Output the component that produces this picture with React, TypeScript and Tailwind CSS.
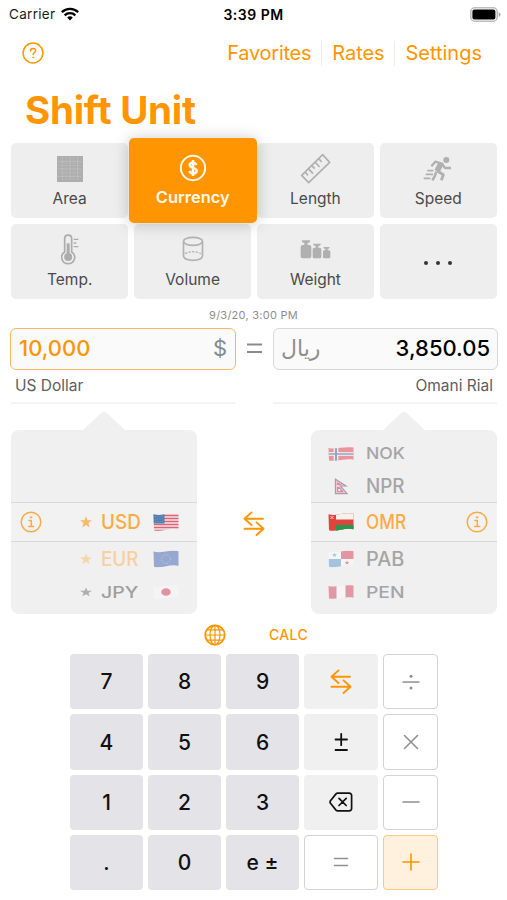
import { useId, useState } from "react";
import type { ReactNode } from "react";
import clsx from "clsx";

const sans = "font-['Inter','Liberation_Sans',sans-serif]";

/* ---------- icons ---------- */

function WifiIcon() {
  return (
    <svg width="18" height="14" viewBox="0 0 54 42" fill="none" stroke="#000" strokeWidth="7">
      <path d="M2.500 15.500a35 35 0 0 1 49 0" />
      <path d="M11 25a23 23 0 0 1 32 0" />
      <path d="M18.500 31.500a12.500 12.500 0 0 1 17 0L27 40.500Z" fill="#000" stroke="none" />
    </svg>
  );
}

function BatteryIcon() {
  return (
    <svg width="31" height="15" viewBox="0 0 31 15">
      <rect x="0.800" y="0.800" width="26.400" height="13.400" rx="4" fill="#fff" stroke="#bdbdbd" strokeWidth="1.600" />
      <rect x="2.400" y="2.600" width="23" height="9.800" rx="2" fill="#000" />
      <path d="M28.700 5.200v4.600c1.300-.4 1.800-1.300 1.800-2.300s-.5-1.900-1.800-2.300Z" fill="#aaa" />
    </svg>
  );
}

function HelpIcon() {
  return (
    <svg width="22" height="22" viewBox="0 0 22 22" fill="none" stroke="#ff9500" strokeWidth="1.500" strokeLinecap="round">
      <circle cx="11" cy="11" r="9.900" />
      <path d="M8.500 8.900c0-1.500 1-2.500 2.600-2.500s2.600.9 2.600 2.200c0 2-2.600 2-2.600 4" />
      <circle cx="11.100" cy="15.400" r="0.500" fill="#ff9500" strokeWidth="0.800" />
    </svg>
  );
}

function InfoIcon() {
  return (
    <svg width="22" height="22" viewBox="0 0 22 22" fill="none" stroke="#fbab45" strokeWidth="1.500" strokeLinecap="round" strokeLinejoin="round">
      <circle cx="11" cy="11" r="9.800" />
      <path d="M9 9.400h2.300v6M8.700 15.600h5" />
      <circle cx="11" cy="6.300" r="0.900" fill="#fbab45" strokeWidth="0.600" />
    </svg>
  );
}

function SwapIcon() {
  return (
    <svg width="22" height="25" viewBox="0 0 22 25" fill="none" stroke="#ff9500" strokeWidth="1.900" strokeLinecap="round" strokeLinejoin="round">
      <path d="M20 7.700H1.800M8.500 1.400 1.500 7.700 8.500 14" />
      <path d="M1.500 17.700h18.300M13.500 11.400l7 6.300-7 6.300" />
    </svg>
  );
}

function GlobeIcon() {
  return (
    <svg width="22" height="22" viewBox="0 0 22 22" fill="none" stroke="#ff9500" strokeWidth="1.200">
      <circle cx="11" cy="11" r="9.700" strokeWidth="1.800" />
      <ellipse cx="11" cy="11" rx="5" ry="9.700" />
      <path d="M11 1.300v19.400M1.300 11h19.400M3 5.800h16M3 16.200h16" />
    </svg>
  );
}

function BackspaceIcon() {
  return (
    <svg width="24" height="20" viewBox="0 0 24 20" fill="none" stroke="#111" strokeWidth="1.700" strokeLinecap="round" strokeLinejoin="round">
      <path d="M8.700 1.200h11.600a2.300 2.300 0 0 1 2.300 2.300v13a2.300 2.300 0 0 1-2.300 2.300H8.700a2.500 2.500 0 0 1-1.700-.7L1.700 11.500a2 2 0 0 1 0-3L7 1.900a2.500 2.500 0 0 1 1.700-.7Z" />
      <path d="m10 6.300 7.200 7.200M17.200 6.300 10 13.500" />
    </svg>
  );
}

function AreaIcon() {
  return (
    <svg width="26" height="26" viewBox="0 0 78 78">
      <rect width="78" height="78" fill="#aeaeae" />
      <path d="M16 3v72M39 3v72M62 3v72M3 17h72M3 39h72M3 61h72" stroke="#c9c9c9" strokeWidth="2.500" strokeDasharray="5 3" />
      <path d="M27.500 3v72M50.500 3v72M3 28h72M3 50h72" stroke="#bcbcbc" strokeWidth="1.500" />
    </svg>
  );
}

function CurrencyIcon() {
  return (
    <svg width="28" height="28" viewBox="0 0 84 84" fill="none" stroke="#fff8ea" strokeWidth="6">
      <circle cx="42" cy="42" r="36.500" />
      <path d="M52 33c-2-5-5-7-10-7-7 0-10 3-10 7 0 11 21 6 21 17 0 5-5 8-11 8s-9-2-11-7M42 18v48" strokeWidth="7.500" />
    </svg>
  );
}

function LengthIcon() {
  return (
    <svg width="31" height="31" viewBox="141 69 93 93" fill="none" stroke="#b0b0b0" strokeWidth="5" strokeLinejoin="round">
      <path d="M146 136 209 74l21 23-63 61Z" />
      <path d="m156 126 9 10M166 116l14 15M176 106l9 10M186 96l14 15M197 86l9 10" />
    </svg>
  );
}

function SpeedIcon() {
  return (
    <svg width="32" height="27" viewBox="510 74 96 81" fill="none" stroke="#b0b0b0" strokeWidth="8.500" strokeLinejoin="round">
      <circle cx="583" cy="89" r="9" fill="#b0b0b0" stroke="none" />
      <path d="m566 101-11 22" strokeWidth="17" />
      <path d="m574 101-24-7-12 14" strokeWidth="7" />
      <path d="m570 101 9 12h18" strokeWidth="7" />
      <path d="m556 122 18 11-6 17" />
      <path d="m553 124-5 14-7 12" strokeWidth="7.500" />
      <path d="M526 121h18M521 132h22M515 144h20" strokeWidth="5" />
    </svg>
  );
}

function TempIcon() {
  return (
    <svg width="18" height="31" viewBox="183 312 54 93" fill="none" stroke="#acacac" strokeWidth="5">
      <path d="M194 366v-40c0-14 21-14 21 0v40c17 11 8 35-10.500 35S177 377 194 366Z" />
      <circle cx="204.500" cy="381" r="12" fill="#acacac" stroke="none" />
      <path d="M204.500 340v38" strokeWidth="9" />
      <path d="M221 328h14M221 339h8M221 350h14" strokeWidth="4" />
    </svg>
  );
}

function VolumeIcon() {
  return (
    <svg width="22" height="26" viewBox="544 319 66 78" fill="none" stroke="#b2b2b2" strokeWidth="5">
      <ellipse cx="577" cy="335" rx="28.500" ry="12" />
      <path d="M548.500 335v45c5 16 52 16 57 0v-45" />
      <path d="M553 372q24-12 48 0" strokeWidth="4" strokeDasharray="7 4" />
    </svg>
  );
}

function WeightIcon() {
  return (
    <svg width="31" height="19" viewBox="142 337 93 57" fill="#b0b0b0">
      <path d="M147 338h26l-3 7h-5v7h6q5 0 5 6v28q0 6-6 6h-20q-6 0-6-6v-28q0-6 6-6h5v-7h-5Z" />
      <path d="M181 348h24l-3 6h-5v6h4q5 0 5 5v22q0 5-5 5h-16q-5 0-5-5v-22q0-5 5-5h4v-6h-5Z" />
      <path d="M212 358h19l-2 5h-4v5h3q5 0 5 4v16q0 4-4 4h-14q-4 0-4-4v-16q0-4 4-4h3v-5h-4Z" />
    </svg>
  );
}

/* ---------- flags ---------- */

const FLAGS: Record<string, ReactNode> = {
  USD: (
    <>
      <rect width="26" height="20" fill="#f4e6e8" />
      <path d="M0 3.500h26M0 6.500h26M0 9.500h26M0 12.500h26M0 15.500h26M0 18.500h26" stroke="#d93f53" strokeWidth="1.700" />
      <rect width="11.500" height="11.500" fill="#2a62a0" />
      <path d="M2 4.500h9M2 7h9M2 9.500h9" stroke="#6f97c4" strokeWidth="0.700" strokeDasharray="1 1.300" />
    </>
  ),
  EUR: (
    <>
      <rect width="26" height="20" fill="#3e62b4" />
      <circle cx="13" cy="10" r="4.600" fill="none" stroke="#c8c77e" strokeWidth="0.800" strokeDasharray="1 1.400" />
    </>
  ),
  JPY: (
    <>
      <rect width="26" height="20" fill="#fbfbfb" />
      <circle cx="13" cy="10" r="4.800" fill="#d4204c" />
    </>
  ),
  NOK: (
    <>
      <rect width="26" height="20" fill="#e23c4b" />
      <path d="M8 0v20M0 10h26" stroke="#fff" strokeWidth="4.600" />
      <path d="M8 0v20M0 10h26" stroke="#345896" strokeWidth="2.200" />
    </>
  ),
  OMR: (
    <>
      <rect width="26" height="20" fill="#dc3c35" />
      <path d="M8 0h18v7.500H8Z" fill="#f5f2ef" />
      <path d="M8 13h18v7H8Z" fill="#189447" />
      <path d="m2.500 4 3 3m0-3-3 3" stroke="#f6c9c3" strokeWidth="1" />
    </>
  ),
  PAB: (
    <>
      <rect width="26" height="20" fill="#fcfcfc" />
      <path d="M13 0h13v10H13Z" fill="#d42945" />
      <path d="M0 10h13v10H0Z" fill="#4491d0" />
      <path d="m6.500 3.500.7 1.600h1.700L7.500 6.200l.6 1.700-1.600-1-1.600 1 .6-1.700-1.400-1.100h1.700Z" fill="#4491d0" />
      <path d="m19 11.500.7 1.600h1.700L20 14.200l.6 1.700-1.600-1-1.600 1 .6-1.700-1.400-1.100h1.700Z" fill="#d42945" />
    </>
  ),
  PEN: (
    <>
      <rect width="26" height="20" fill="#fcfcfc" />
      <path d="M0 0h8.500v20H0ZM17.500 0H26v20h-8.500Z" fill="#cf2f47" />
    </>
  ),
};

function Flag({ code, className }: { code: string; className?: string }) {
  const id = useId();

  // Nepal is the one flag that isn't a rectangle
  if (code === "NPR") {
    return (
      <svg width="26" height="19" viewBox="0 0 26 20" preserveAspectRatio="none" className={className}>
        <path d="M7.500 2 18 9.500h-5.500l6.500 8.500H7.500Z" fill="#ecc3cd" stroke="#7f6380" strokeWidth="1.300" />
        <path d="M9 5l5.500 3.500H9ZM9 10.500h2.500l4.500 6H9Z" fill="#d94466" />
        <circle cx="11.300" cy="14" r="1.200" fill="#fff" />
      </svg>
    );
  }

  return (
    <svg width="26" height="20" viewBox="0 0 26 20" preserveAspectRatio="none" className={className}>
      <defs>
        <clipPath id={id}>
          <path d="M.5 2.200c4 1.200 7.500.7 12-.2s8.500-1.100 13-.3v15.600c-4-1.200-8-.5-12.500.4S4.500 19.200 1 18.200Z" />
        </clipPath>
      </defs>
      <g clipPath={`url(#${id})`}>{FLAGS[code]}</g>
    </svg>
  );
}

/* ---------- unit tiles ---------- */

const UNITS: { label: string; icon: ReactNode }[] = [
  { label: "Area", icon: <AreaIcon /> },
  { label: "Currency", icon: <CurrencyIcon /> },
  { label: "Length", icon: <LengthIcon /> },
  { label: "Speed", icon: <SpeedIcon /> },
  { label: "Temp.", icon: <TempIcon /> },
  { label: "Volume", icon: <VolumeIcon /> },
  { label: "Weight", icon: <WeightIcon /> },
];

function UnitTile({ label, icon, active, onClick }: { label: string; icon: ReactNode; active: boolean; onClick: () => void }) {
  return (
    <button
      type="button"
      onClick={onClick}
      className={clsx(
        "flex flex-col items-center rounded-[5px]",
        active
          ? "relative z-10 -mr-[5.500px] -ml-[5px] -my-[5px] bg-[#ff9500] pt-[13px] text-[16.500px] font-semibold text-[#fff8ea] shadow-[0_1px_16px_rgba(0,0,0,0.22)]"
          : "bg-[#eeeeee] pt-[9px] text-[15.500px] text-[#4a4a4a]",
      )}
    >
      <span className="flex h-[33px] items-center justify-center">{icon}</span>
      <span className="leading-[27px]">{label}</span>
    </button>
  );
}

/* ---------- pickers ---------- */

type Row = { code: string; star?: boolean; text: string; fit: string; dim: string; squash?: string };

const FROM: Row[] = [
  { code: "USD", star: true, text: "text-[#fbab45] font-medium", fit: "scale-x-[0.920]", dim: "opacity-80" },
  { code: "EUR", star: true, text: "text-[#f9cf9c] font-medium", fit: "scale-x-[0.920]", dim: "opacity-50", squash: "scale-y-95" },
  { code: "JPY", star: true, text: "text-[#9e9e9e] font-medium", fit: "scale-x-[0.950]", dim: "opacity-45", squash: "scale-y-[0.780]" },
];

const TO: Row[] = [
  { code: "NOK", text: "text-[#a5a5a5] font-medium", fit: "scale-x-[0.860]", dim: "opacity-50", squash: "scale-y-[0.780]" },
  { code: "NPR", text: "text-[#a5a5a5] font-medium", fit: "scale-x-[0.920]", dim: "opacity-60", squash: "scale-y-95" },
  { code: "OMR", text: "text-[#fbab45] font-medium", fit: "scale-x-[0.840]", dim: "opacity-95" },
  { code: "PAB", text: "text-[#a5a5a5] font-medium", fit: "scale-x-[0.970]", dim: "opacity-45", squash: "scale-y-95" },
  { code: "PEN", text: "text-[#a5a5a5] font-medium", fit: "scale-x-[0.940]", dim: "opacity-45", squash: "scale-y-[0.780]" },
];

function Star({ className }: { className: string }) {
  return (
    <svg width="12" height="12" viewBox="0 0 12 12" className={className} fill="currentColor">
      <path d="m6 0 1.500 4.200 4.500.1-3.600 2.800 1.300 4.400L6 8.900l-3.700 2.600 1.300-4.400L0 4.300l4.500-.1Z" />
    </svg>
  );
}

function PickerRow({ row, side }: { row: Row; side: "from" | "to" }) {
  if (side === "from") {
    return (
      <div className={clsx("flex flex-1 items-center justify-end pr-[18px]", row.squash)}>
        <Star className={clsx("mr-[9px]", row.text, "opacity-80")} />
        <span className={clsx("w-[40px] origin-left text-[20.500px] leading-none", row.text, row.fit)}>{row.code}</span>
        <Flag code={row.code} className={clsx("ml-[12px]", row.dim)} />
      </div>
    );
  }
  return (
    <div className={clsx("flex flex-1 items-center pl-[17px]", row.squash)}>
      <Flag code={row.code} className={row.dim} />
      <span className={clsx("ml-[12px] origin-left text-[20.500px] leading-none", row.text, row.fit)}>{row.code}</span>
    </div>
  );
}

function Picker({ rows, side }: { rows: Row[]; side: "from" | "to" }) {
  const above = side === "from" ? [] : rows.slice(0, 2);
  const current = side === "from" ? rows[0] : rows[2];
  const below = side === "from" ? rows.slice(1) : rows.slice(3);

  return (
    <div className="flex w-[186px] flex-col">
      <svg width="42" height="19" viewBox="0 0 42 19" className="mx-auto block">
        <path d="M0 19 18 2.300Q21-.5 24 2.300L42 19Z" fill="#f0f0f0" />
      </svg>
      <div className="flex h-[184px] flex-col overflow-hidden rounded-[8px] bg-[#f0f0f0]">
        <div className="flex h-[72px] flex-col pt-[8px]">
          {above.map((row) => (
            <PickerRow key={row.code} row={row} side={side} />
          ))}
        </div>
        <div className={clsx("flex h-[40px] items-center border-y border-[#d8d8d8] bg-[#f2f2f2]", side === "to" && "flex-row-reverse")}>
          <button type="button" className="mx-[9px]">
            <InfoIcon />
          </button>
          <PickerRow row={current} side={side} />
        </div>
        <div className="flex h-[66px] flex-col pt-px">
          {below.map((row) => (
            <PickerRow key={row.code} row={row} side={side} />
          ))}
        </div>
      </div>
    </div>
  );
}

/* ---------- keypad ---------- */

type Key = { id: string; face: ReactNode; kind: "digit" | "fn" | "equals" | "op" | "add" };

function OpGlyph({ d }: { d: string }) {
  return (
    <svg width="20" height="20" viewBox="0 0 20 20" fill="none" stroke="currentColor" strokeWidth="1.600" strokeLinecap="round">
      <path d={d} />
    </svg>
  );
}

const digit = (s: string): Key => ({ id: s, face: s, kind: "digit" });

const KEYS: Key[] = [
  digit("7"),
  digit("8"),
  digit("9"),
  { id: "swap", face: <SwapIcon />, kind: "fn" },
  {
    id: "div",
    face: (
      <svg width="20" height="20" viewBox="0 0 20 20" fill="#919191">
        <rect x="1.500" y="9.300" width="17" height="1.500" />
        <circle cx="10" cy="4.300" r="1.500" />
        <circle cx="10" cy="15.900" r="1.500" />
      </svg>
    ),
    kind: "op",
  },
  digit("4"),
  digit("5"),
  digit("6"),
  {
    id: "sign",
    face: (
      <svg width="16" height="20" viewBox="0 0 16 20" fill="none" stroke="#111" strokeWidth="1.800" strokeLinecap="round">
        <path d="M2.500 7.500h11.500M8.200 1.800v11.400M2.500 18h11.500" />
      </svg>
    ),
    kind: "fn",
  },
  { id: "mul", face: <OpGlyph d="m3.500 3.500 13 13m0-13-13 13" />, kind: "op" },
  digit("1"),
  digit("2"),
  digit("3"),
  { id: "del", face: <BackspaceIcon />, kind: "fn" },
  { id: "sub", face: <OpGlyph d="M2 10h16" />, kind: "op" },
  digit("."),
  digit("0"),
  digit("e ±"),
  { id: "eq", face: <OpGlyph d="M3.500 6.500h13M3.500 13.500h13" />, kind: "equals" },
  { id: "add", face: <OpGlyph d="M2 10h16M10 2v16" />, kind: "add" },
];

const KEY_STYLES: Record<Key["kind"], string> = {
  digit: "bg-[#e4e3e8] text-[#111] font-medium pt-px",
  fn: "bg-[#f0f0f0]",
  equals: "bg-white border-[1.500px] border-[#d4d4d4] text-[#919191]",
  op: "bg-white border-[1.500px] border-[#d4d4d4] text-[#919191]",
  add: "bg-[#fff1de] border-[1.500px] border-[#fcc980] text-[#ff9500]",
};

export default function App() {
  const [unit, setUnit] = useState("Currency");

  return (
    <div className={clsx(sans, "flex h-[900px] w-[507px] flex-col overflow-hidden bg-white")}>
      {/* status bar */}
      <div className="grid h-[28px] grid-cols-[1fr_auto_1fr] items-center pr-[6px] pl-[9px] text-[13.500px] text-[#1c1c1c]">
        <div className="flex items-center gap-[6px]">
          <span className="tracking-[0.300px]">Carrier</span>
          <WifiIcon />
        </div>
        <span className="mr-[3px] text-[14px] font-semibold tracking-[0.500px] text-black">3:39 PM</span>
        <div className="flex justify-end">
          <BatteryIcon />
        </div>
      </div>

      {/* nav */}
      <nav className="flex h-[50px] items-center justify-between pr-[25px] pl-[22px] text-[20px] text-[#ff9500]">
        <button type="button">
          <HelpIcon />
        </button>
        <div className="flex items-center">
          <button type="button" className="tracking-[-0.250px]">
            Favorites
          </button>
          <span className="mr-[10px] ml-[10px] h-[25px] w-px bg-[#ececec]" />
          <button type="button" className="tracking-[-0.100px]">
            Rates
          </button>
          <span className="mx-[10px] h-[25px] w-px bg-[#ececec]" />
          <button type="button">Settings</button>
        </div>
      </nav>

      <h1 className="h-[65px] pl-[25px] text-[38.500px] leading-[64px] font-bold tracking-[-0.250px] text-[#ff9500]">Shift Unit</h1>

      {/* units */}
      <div className="mr-[10px] ml-[11px] grid h-[156px] grid-cols-4 grid-rows-2 gap-[5.500px]">
        {UNITS.map((u) => (
          <UnitTile key={u.label} {...u} active={unit === u.label} onClick={() => setUnit(u.label)} />
        ))}
        <button type="button" className="flex items-center justify-center gap-[8px] rounded-[5px] bg-[#eeeeee] pt-[3px]">
          {[0, 1, 2].map((i) => (
            <span key={i} className="size-[4px] rounded-full bg-[#333]" />
          ))}
        </button>
      </div>

      <div className="h-[29px] pt-[1px] text-center text-[11px] leading-[31px] tracking-[0.250px] text-[#8e8e8e]">9/3/20, 3:00 PM</div>

      {/* converter */}
      <div className="mr-[9px] ml-[10px] flex h-[76px] justify-between">
        <div className="flex w-[226px] flex-col">
          <div className="flex h-[42px] items-center justify-between rounded-[6px] border-[1.500px] border-[#f9b765] bg-[#fafafa] px-[8px] pb-px text-[22px]">
            <span className="font-medium text-[#ff9500]">10,000</span>
            <span className="text-[#8a8a8a]">$</span>
          </div>
          <div className="ml-px flex-1 border-b-2 border-[#f4f4f4] pl-[4px] text-[15.500px] leading-[31px] text-[#5e5e5e]">US Dollar</div>
        </div>
        <svg width="16" height="42" viewBox="0 0 16 42" stroke="#8a8a8a" strokeWidth="1.900">
          <path d="M0 16.500h15M0 24h15" />
        </svg>
        <div className="flex w-[225px] flex-col">
          <div className="flex h-[42px] items-center justify-between rounded-[6px] border-[1.500px] border-[#d8d8d8] bg-[#fafafa] px-[7px] pb-px text-[22px]">
            <span className="font-['DejaVu_Sans',sans-serif] text-[#8f8f8f]" dir="rtl">
              ريال
            </span>
            <span className="font-medium text-black">3,850.05</span>
          </div>
          <div className="mr-px flex-1 border-b-2 border-[#f4f4f4] pr-[4px] text-right text-[15.500px] leading-[31px] text-[#5e5e5e]">Omani Rial</div>
        </div>
      </div>

      {/* pickers */}
      <div className="mr-[10px] ml-[11px] flex h-[210px] items-start justify-between pt-[7px]">
        <Picker rows={FROM} side="from" />
        <button type="button" className="mt-[100px]">
          <SwapIcon />
        </button>
        <Picker rows={TO} side="to" />
      </div>

      {/* keypad */}
      <div className="flex h-[40px] items-center pt-px pl-[204px] text-[14px] font-medium text-[#ff9500]">
        <button type="button">
          <GlobeIcon />
        </button>
        <button type="button" className="ml-[43px] tracking-[0.350px]">
          CALC
        </button>
      </div>
      <div className="ml-[70px] grid h-[236px] w-[368px] grid-cols-[73px_73px_73px_74px_55px] grid-rows-4 gap-[5px]">
        {KEYS.map((k) => (
          <button key={k.id} type="button" className={clsx("flex items-center justify-center rounded-[4px] text-[21px]", KEY_STYLES[k.kind])}>
            {k.face}
          </button>
        ))}
      </div>
    </div>
  );
}
